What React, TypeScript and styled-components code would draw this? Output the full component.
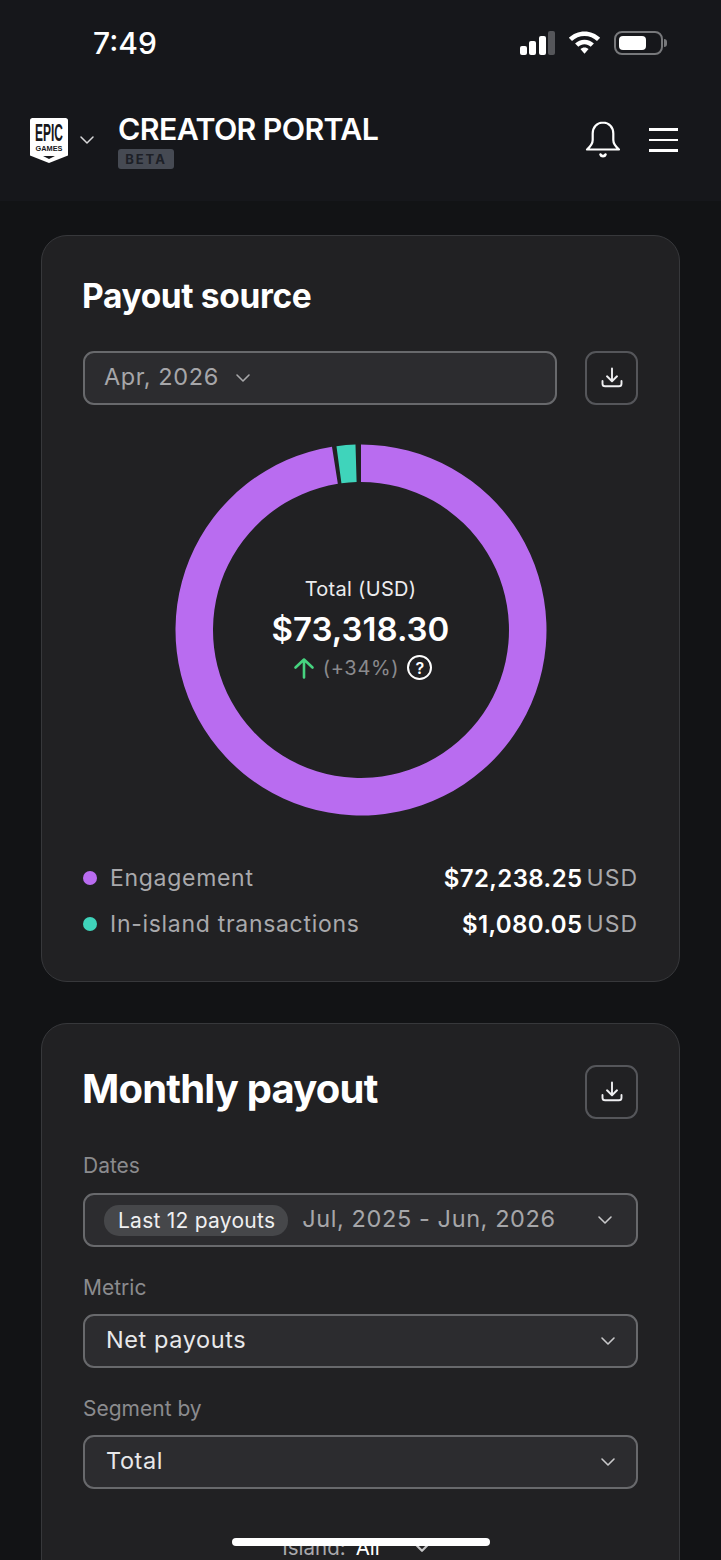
import type { ReactNode } from "react"
import { ChevronDown } from "lucide-react"
import styled, { createGlobalStyle } from "styled-components"

const GlobalStyle = createGlobalStyle`
  html, body {
    margin: 0;
    height: 1560px;
    overflow: hidden;
    background: #121315;
    font-family: Inter, "Liberation Sans", sans-serif;
    color: #fff;
  }
  * { box-sizing: border-box; }
`

const CENTER = 186
const OUTER = 185.5
const INNER = 148

const point = (radius: number, deg: number) => {
  const rad = (deg * Math.PI) / 180
  return `${CENTER + radius * Math.sin(rad)} ${CENTER - radius * Math.cos(rad)}`
}

const segment = (from: number, to: number) => {
  const large = to - from > 180 ? 1 : 0
  return [
    `M${point(OUTER, from)}`,
    `A${OUTER} ${OUTER} 0 ${large} 1 ${point(OUTER, to)}`,
    `L${point(INNER, to)}`,
    `A${INNER} ${INNER} 0 ${large} 0 ${point(INNER, from)}`,
    "Z",
  ].join(" ")
}

const DownloadIcon = () => (
  <svg width="24" height="24" viewBox="0 0 24 24" fill="none" stroke="#f0f0f2" strokeWidth="1.9" strokeLinecap="round" strokeLinejoin="round">
    <path d="M12 2.500v12.500M7 10.300l5 4.900 5-4.900" />
    <path d="M2.500 15v2.700c0 1.600 1 2.600 2.600 2.600h13.800c1.600 0 2.600-1 2.600-2.600V15" />
  </svg>
)

const Select = ({ children }: { children: ReactNode }) => <SelectBox>{children}</SelectBox>

const App = () => (
  <Page>
    <GlobalStyle />
    <Header>
      <StatusBar>
        <Time>7:49</Time>
        <StatusIcons>
          <SignalBars>
            <Bar $h={9} />
            <Bar $h={14} />
            <Bar $h={19} />
            <Bar $h={24} $dim />
          </SignalBars>
          <svg width="33" height="24" viewBox="0 0 33 24" fill="#fff">
            <path d="M16.500 0.500C10.500 0.500 5 2.800 0.800 6.800l3.200 3.300C7.300 7 11.700 5.100 16.500 5.100s9.200 1.900 12.500 5l3.200-3.300C28 2.800 22.500 0.500 16.500 0.500z" />
            <path d="M16.500 8.700c-3.600 0-6.900 1.400-9.400 3.700l3.200 3.300c1.700-1.500 3.800-2.400 6.200-2.400s4.500.9 6.200 2.400l3.200-3.300c-2.500-2.300-5.800-3.700-9.400-3.700z" />
            <path d="M16.500 16.500c-1.600 0-3 .6-4.100 1.600l4.100 4.700 4.100-4.700c-1.100-1-2.500-1.600-4.100-1.600z" />
          </svg>
          <Battery>
            <BatteryFill />
            <BatteryCap />
          </Battery>
        </StatusIcons>
      </StatusBar>

      <NavBar>
        <Brand>
          <svg width="38" height="45" viewBox="0 0 38 45">
            <path d="M2.500 0h33C37 0 38 1 38 2.500v35L19 45 0 37.500v-35C0 1 1 0 2.500 0z" fill="#fff" />
            <path d="M13 38h12l-6 3z" fill="#16171b" />
            <LogoMain transform="translate(19 23) scale(0.52 1)" textAnchor="middle">EPIC</LogoMain>
            <LogoSub x="19" y="32.500" textAnchor="middle">GAMES</LogoSub>
          </svg>
          <ChevronDown size={24} color="#d8d8da" strokeWidth={1.500} />
          <BrandText>
            <PortalName>CREATOR PORTAL</PortalName>
            <BetaTag>BETA</BetaTag>
          </BrandText>
        </Brand>
        <NavActions>
          <svg width="36" height="38" viewBox="0 0 36 38" fill="none" stroke="#fff" strokeWidth="2.200" strokeLinecap="round" strokeLinejoin="round">
            <path d="M18 1.500c-6.200 0-10.300 4.800-10.300 11v6.500c0 4-2.200 6.500-5.700 9.500h32c-3.500-3-5.700-5.500-5.700-9.500v-6.500c0-6.200-4.100-11-10.300-11z" />
            <path d="M15.500 33.500c.8 2.200 4.200 2.200 5 0" strokeWidth="2.600" />
          </svg>
          <MenuIcon>
            <span />
            <span />
            <span />
          </MenuIcon>
        </NavActions>
      </NavBar>
    </Header>

    <Content>
      <SourceCard>
        <PayoutTitle>Payout source</PayoutTitle>
        <ControlRow>
          <Select>
            <SelectValue>Apr, 2026</SelectValue>
            <ChevronDown size={24} color="#a8a8aa" strokeWidth={1.600} />
          </Select>
          <IconButton>
            <DownloadIcon />
          </IconButton>
        </ControlRow>

        <Chart>
          <svg width="372" height="372" viewBox="0 0 372 372">
            <path d={segment(0, 351)} fill="#b96cf0" />
            <path d={segment(352.400, 358.300)} fill="#3fd4bb" />
          </svg>
          <ChartCenter>
            <TotalLabel>Total (USD)</TotalLabel>
            <TotalValue>$73,318.30</TotalValue>
            <TrendRow>
              <svg width="24" height="22" viewBox="0 0 24 22" fill="none" stroke="#46d37f" strokeWidth="2.600" strokeLinecap="round" strokeLinejoin="round">
                <path d="M12 20.500V2.500M3.500 10.500L12 2.500l8.500 8" />
              </svg>
              <TrendText>(+34%)</TrendText>
              <HelpBadge>?</HelpBadge>
            </TrendRow>
          </ChartCenter>
        </Chart>

        <Legend>
          <LegendRow>
            <Dot $color="#b96cf0" />
            <LegendName>Engagement</LegendName>
            <Amount>$72,238.25</Amount>
            <Currency>USD</Currency>
          </LegendRow>
          <LegendRow>
            <Dot $color="#3fd4bb" />
            <LegendName>In-island transactions</LegendName>
            <Amount>$1,080.05</Amount>
            <Currency>USD</Currency>
          </LegendRow>
        </Legend>
      </SourceCard>

      <MonthlyCard>
        <MonthlyHead>
          <MonthlyTitle>Monthly payout</MonthlyTitle>
          <IconButton>
            <DownloadIcon />
          </IconButton>
        </MonthlyHead>

        <FieldLabel>Dates</FieldLabel>
        <DatesBox>
          <Pill>Last 12 payouts</Pill>
          <SelectValue>Jul, 2025 - Jun, 2026</SelectValue>
          <ChevronDown size={24} color="#c8c8ca" strokeWidth={1.600} />
        </DatesBox>

        <FieldLabel>Metric</FieldLabel>
        <FieldBox>
          <FieldValue>Net payouts</FieldValue>
          <ChevronDown size={24} color="#c8c8ca" strokeWidth={1.600} />
        </FieldBox>

        <FieldLabel>Segment by</FieldLabel>
        <FieldBox>
          <FieldValue>Total</FieldValue>
          <ChevronDown size={24} color="#c8c8ca" strokeWidth={1.600} />
        </FieldBox>

        <IslandRow>
          <IslandLabel>Island:</IslandLabel>
          <IslandValue>All</IslandValue>
          <ChevronDown size={22} color="#c8c8ca" strokeWidth={2.500} />
        </IslandRow>
      </MonthlyCard>
    </Content>

    <HomeIndicator />
  </Page>
)

const Page = styled.div`
  position: relative;
  width: 721px;
  height: 1560px;
  overflow: hidden;
`

const Header = styled.header`
  height: 201px;
  background: #16171b;
`

const StatusBar = styled.div`
  height: 88px;
  display: flex;
  align-items: center;
  justify-content: space-between;
  padding: 0 58px 2px 93px;
`

const Time = styled.span`
  font-size: 30px;
  font-weight: 500;
  line-height: 1;
`

const StatusIcons = styled.div`
  display: flex;
  align-items: center;
  gap: 13px;
`

const SignalBars = styled.div`
  display: flex;
  align-items: flex-end;
  gap: 2.500px;
  height: 24px;
`

const Bar = styled.span<{ $h: number; $dim?: boolean }>`
  width: 7px;
  height: ${({ $h }) => $h}px;
  border-radius: 2px;
  background: ${({ $dim }) => ($dim ? "#55565a" : "#fff")};
`

const Battery = styled.div`
  position: relative;
  width: 49px;
  height: 24px;
  padding: 3px;
  border: 2px solid #77787b;
  border-radius: 8px;
`

const BatteryFill = styled.div`
  width: 27px;
  height: 14px;
  border-radius: 4px;
  background: #fff;
`

const BatteryCap = styled.div`
  position: absolute;
  right: -6px;
  top: 6px;
  width: 3px;
  height: 8px;
  border-radius: 0 3px 3px 0;
  background: #77787b;
`

const NavBar = styled.div`
  display: flex;
  align-items: center;
  justify-content: space-between;
  padding: 0 43px 0 30px;
  height: 104px;
`

const Brand = styled.div`
  display: flex;
  align-items: center;
  gap: 7px;
`

const LogoMain = styled.text`
  font-family: "Liberation Sans", sans-serif;
  font-size: 23px;
  font-weight: 700;
  fill: #16171b;
`

const LogoSub = styled.text`
  font-family: "Liberation Sans", sans-serif;
  font-size: 7.300px;
  font-weight: 700;
  fill: #16171b;
`

const BrandText = styled.div`
  display: flex;
  flex-direction: column;
  align-items: flex-start;
  gap: 3px;
  margin-left: 12px;
`

const PortalName = styled.div`
  font-size: 30.300px;
  font-weight: 600;
  line-height: 34px;
  letter-spacing: -0.6px;
`

const BetaTag = styled.span`
  width: 56px;
  height: 20px;
  border-radius: 3px;
  background: #464a53;
  color: #1d2027;
  font-size: 13px;
  font-weight: 700;
  line-height: 20px;
  letter-spacing: 2px;
  text-align: center;
`

const NavActions = styled.div`
  display: flex;
  align-items: center;
  gap: 28px;
`

const MenuIcon = styled.div`
  display: flex;
  flex-direction: column;
  gap: 8px;
  width: 29px;
  span {
    height: 2.500px;
    background: #fff;
  }
`

const Content = styled.main`
  display: flex;
  flex-direction: column;
  gap: 41px;
  padding: 34px 41px 0;
`

const Card = styled.section`
  flex-shrink: 0;
  padding: 41px 41px 0;
  border: 1px solid #37383b;
  border-radius: 26px;
  background: #212123;
`

const SourceCard = styled(Card)`
  height: 747px;
`

const MonthlyCard = styled(Card)`
  padding-bottom: 60px;
`

const PayoutTitle = styled.h2`
  margin: -1px 0 0 -1px;
  font-size: 33.500px;
  font-weight: 700;
  line-height: 40px;
  letter-spacing: -0.35px;
`

const ControlRow = styled.div`
  display: flex;
  gap: 28px;
  margin-top: 35px;
`

const SelectBox = styled.div`
  flex: 1;
  display: flex;
  align-items: center;
  gap: 12px;
  height: 54px;
  padding: 0 20px 0 19px;
  border: 2px solid #68696c;
  border-radius: 11px;
  background: #2c2c2f;
`

const SelectValue = styled.span`
  margin-top: -3px;
  color: #a6a6a9;
  font-size: 23.500px;
  font-weight: 400;
  letter-spacing: 0.6px;
  white-space: nowrap;
`

const IconButton = styled.button`
  flex: none;
  display: flex;
  align-items: center;
  justify-content: center;
  width: 53px;
  height: 54px;
  padding: 0;
  border: 2px solid #55565a;
  border-radius: 11px;
  background: transparent;
`

const Chart = styled.div`
  position: relative;
  width: 372px;
  height: 372px;
  margin: 39px auto 0;
`

const ChartCenter = styled.div`
  position: absolute;
  inset: 0;
  display: flex;
  flex-direction: column;
  align-items: center;
  justify-content: center;
  padding-bottom: 5px;
`

const TotalLabel = styled.div`
  margin-bottom: 4px;
  color: #ececee;
  font-size: 20px;
  line-height: 28px;
  letter-spacing: 0.3px;
`

const TotalValue = styled.div`
  font-size: 33px;
  font-weight: 600;
  line-height: 44px;
`

const TrendRow = styled.div`
  display: flex;
  align-items: center;
  gap: 7px;
  margin-top: 4px;
  padding-left: 3px;
`

const TrendText = styled.span`
  color: #8a8a8d;
  font-size: 20px;
  letter-spacing: 0.7px;
`

const HelpBadge = styled.span`
  display: flex;
  align-items: center;
  justify-content: center;
  width: 25px;
  height: 25px;
  margin-left: 1px;
  border: 2.300px solid #fff;
  border-radius: 50%;
  font-size: 16px;
  font-weight: 600;
`

const Legend = styled.div`
  display: flex;
  flex-direction: column;
  gap: 16px;
  margin-top: 47px;
`

const LegendRow = styled.div`
  display: flex;
  align-items: center;
  height: 30px;
`

const Dot = styled.span<{ $color: string }>`
  width: 14px;
  height: 14px;
  margin-right: 13px;
  border-radius: 50%;
  background: ${({ $color }) => $color};
`

const LegendName = styled.span`
  flex: 1;
  color: #a9a9ac;
  font-size: 23px;
  letter-spacing: 0.7px;
`

const Amount = styled.span`
  font-size: 24px;
  font-weight: 600;
  letter-spacing: 0.4px;
`

const Currency = styled.span`
  margin-left: 4px;
  color: #a9a9ac;
  font-size: 23px;
  letter-spacing: 1px;
`

const MonthlyHead = styled.div`
  display: flex;
  align-items: flex-start;
  justify-content: space-between;
`

const MonthlyTitle = styled.h2`
  margin: 0 0 0 -1px;
  font-size: 40px;
  font-weight: 700;
  line-height: 48px;
  letter-spacing: -0.8px;
`

const FieldLabel = styled.div`
  margin: 28px 0 13px;
  color: #8b8b8e;
  font-size: 21px;
  line-height: 26px;
  ${MonthlyHead} + & {
    margin: 34px 0 14px;
  }
`

const FieldBox = styled.div`
  display: flex;
  align-items: center;
  justify-content: space-between;
  height: 54px;
  padding: 0 16px 0 21px;
  border: 2px solid #68696c;
  border-radius: 11px;
  background: #2c2c2f;
`

const DatesBox = styled(FieldBox)`
  justify-content: flex-start;
  padding: 0 19px 0 19px;
  svg {
    margin-left: auto;
  }
`

const Pill = styled.span`
  margin-right: 14px;
  padding: 0 13px 0 14px;
  border-radius: 15px;
  background: #46474a;
  color: #efeff1;
  font-size: 21px;
  line-height: 31px;
  letter-spacing: 0.25px;
`

const FieldValue = styled.span`
  margin-top: -3px;
  color: #e8e8ea;
  font-size: 23.500px;
  letter-spacing: 0.6px;
`

const IslandRow = styled.div`
  display: flex;
  align-items: center;
  justify-content: center;
  gap: 10px;
  margin-top: 46px;
  padding-right: 6px;
  color: #a9a9ac;
  font-size: 20.500px;
  svg {
    margin-left: 21px;
  }
`

const IslandLabel = styled.span``

const IslandValue = styled.span`
  color: #fff;
`

const HomeIndicator = styled.div`
  position: absolute;
  left: 232px;
  bottom: 14px;
  width: 258px;
  height: 8px;
  border-radius: 4px;
  background: #fff;
`

export default App
